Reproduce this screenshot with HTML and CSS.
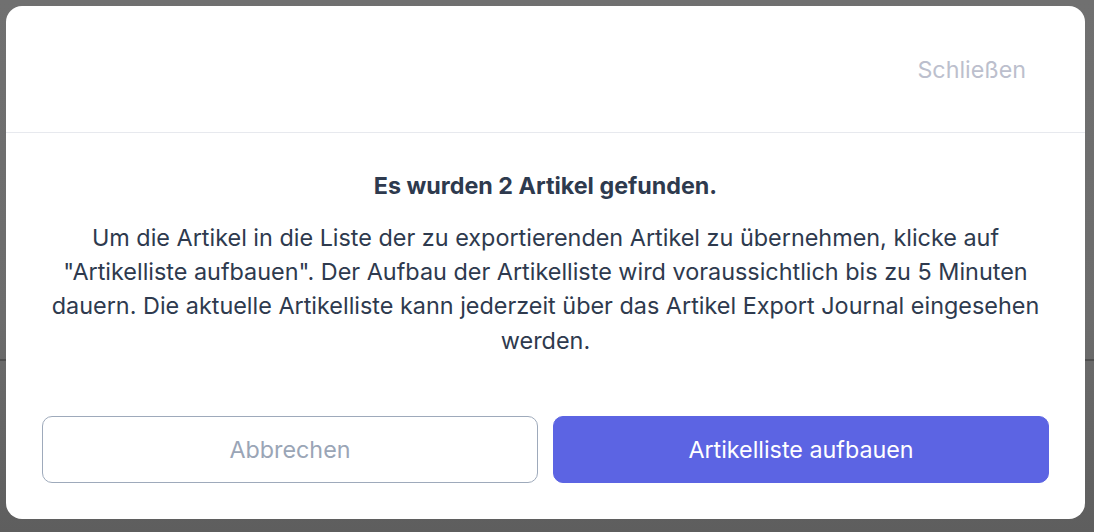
FILE: index.html
```html
<!DOCTYPE html>
<html lang="de">
<head>
<meta charset="utf-8">
<link rel="stylesheet" href="styles.css">
</head>
<body>
<div class="backdrop">
  <div class="page-line"></div>
  <div class="modal">
    <div class="modal-header">
      <button class="close-btn">Schließen</button>
    </div>
    <div class="modal-body">
      <h2 class="title">Es wurden 2 Artikel gefunden.</h2>
      <p class="text">Um die Artikel in die Liste der zu exportierenden Artikel zu übernehmen, klicke auf "Artikelliste aufbauen". Der Aufbau der Artikelliste wird voraussichtlich bis zu 5 Minuten dauern. Die aktuelle Artikelliste kann jederzeit über das Artikel Export Journal eingesehen werden.</p>
      <div class="actions">
        <button class="btn btn-secondary">Abbrechen</button>
        <button class="btn btn-primary">Artikelliste aufbauen</button>
      </div>
    </div>
  </div>
</div>
</body>
</html>
```
FILE: styles.css
```css
* { box-sizing: border-box; }
html, body { margin: 0; padding: 0; }
body {
  width: 1094px;
  height: 532px;
  overflow: hidden;
  font-family: Inter, "Noto Sans", sans-serif;
}
.backdrop {
  position: relative;
  width: 1094px;
  height: 532px;
  background: linear-gradient(180deg, #707070 0%, #6c6c6c 60%, #5e5e5e 100%);
  padding: 6px 9px 13px 6px;
}
.page-line {
  position: absolute;
  left: 0;
  right: 0;
  top: 359px;
  height: 2px;
  background: #4f4f4f;
}
.modal {
  position: relative;
  width: 1079px;
  height: 513px;
  background: #ffffff;
  border-radius: 16px;
  display: flex;
  flex-direction: column;
}
.modal-header {
  height: 127px;
  border-bottom: 1px solid #e7e9ee;
  display: flex;
  justify-content: flex-end;
  align-items: center;
  padding: 0 59px 0 36px;
}
.close-btn {
  background: none;
  border: none;
  padding: 0;
  font-family: inherit;
  font-size: 23.3px;
  line-height: 30px;
  color: #bcbfcd;
  margin-top: 2px;
  cursor: pointer;
}
.modal-body {
  padding: 36px 36px 36px;
  display: flex;
  flex-direction: column;
  align-items: center;
  text-align: center;
}
.title {
  margin: 0;
  font-size: 23.3px;
  line-height: 34px;
  font-weight: 700;
  color: #2e3a4e;
}
.text {
  margin: 18px 0 0;
  font-size: 23.4px;
  line-height: 34.3px;
  font-weight: 400;
  color: #2e3a4e;
}
.actions {
  margin-top: 58px;
  width: 100%;
  display: flex;
  gap: 15px;
}
.btn {
  flex: 1;
  height: 67px;
  border-radius: 10px;
  font-family: inherit;
  font-size: 23.3px;
  cursor: pointer;
}
.btn-secondary {
  background: #ffffff;
  border: 1px solid #9eaabb;
  color: #9aa5b6;
}
.btn-primary {
  background: #5c64e3;
  border: 1px solid #5c64e3;
  color: #ffffff;
}
```
